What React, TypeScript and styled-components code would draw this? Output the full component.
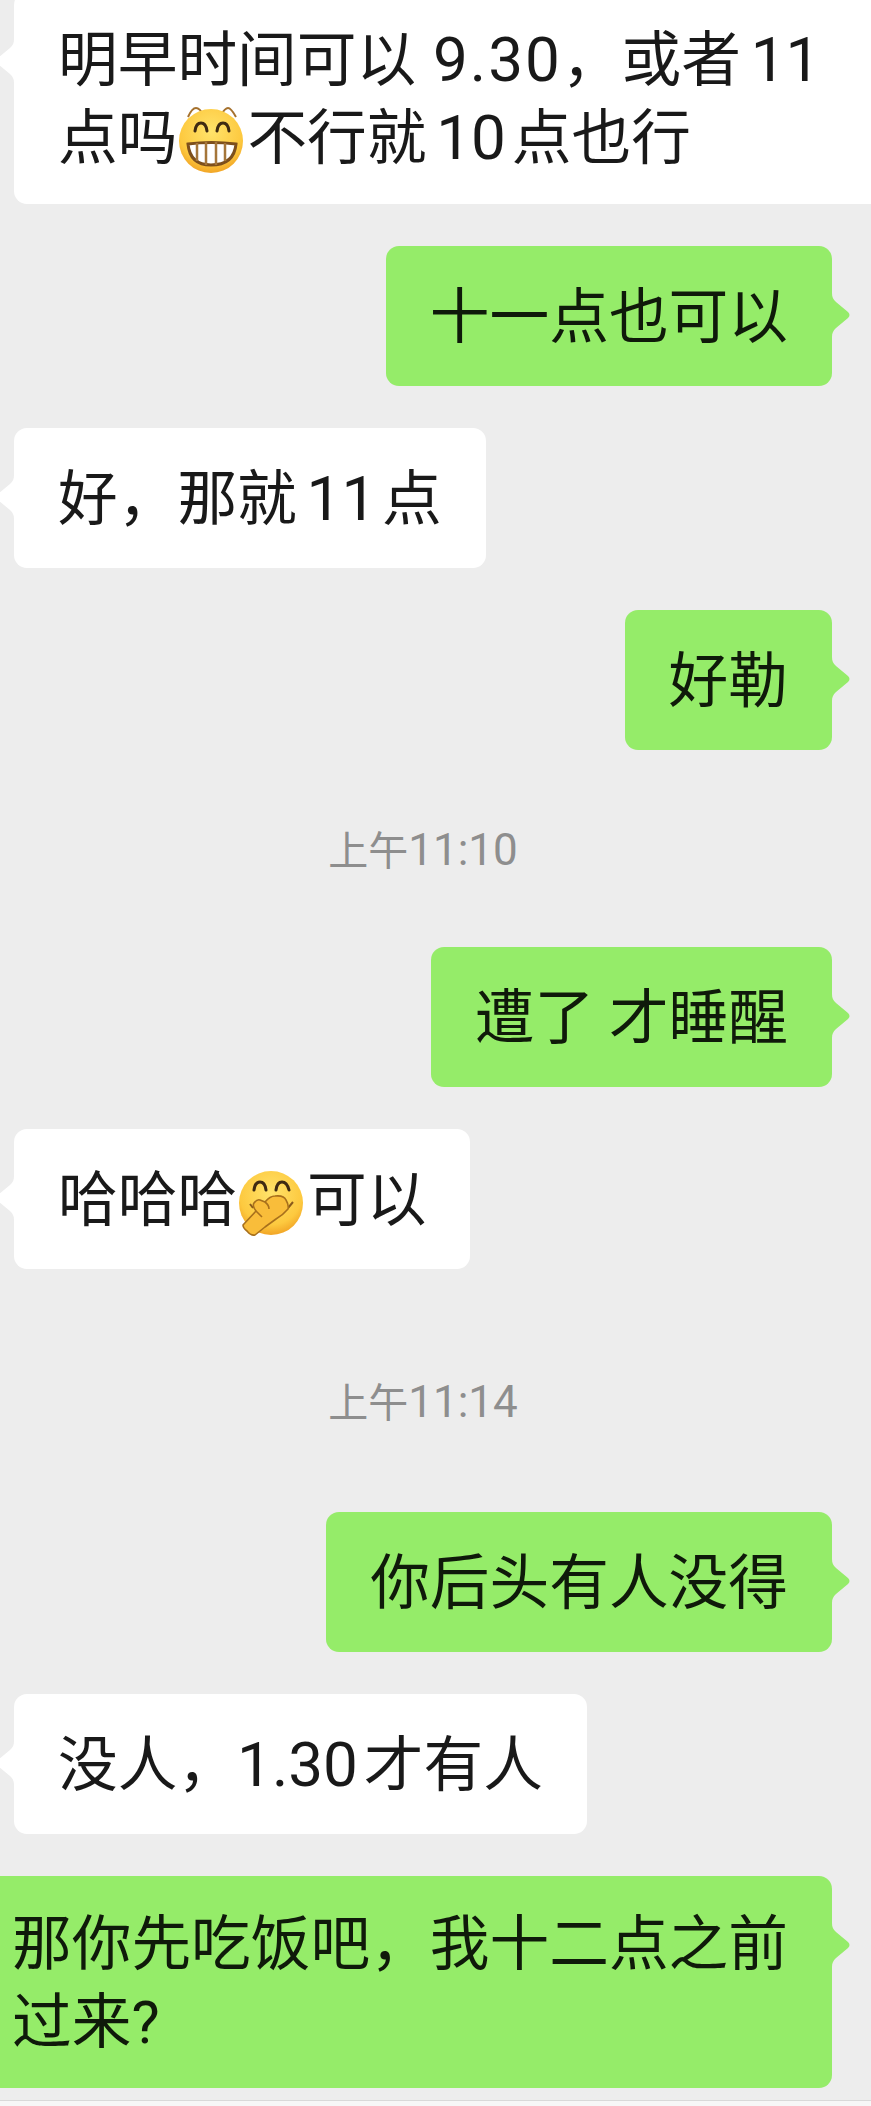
import styled, { createGlobalStyle } from "styled-components";

const GlobalStyle = createGlobalStyle`
  html, body {
    margin: 0;
    height: 2106px;
    overflow: hidden;
    background: #ededed;
  }
  #root {
    height: 2106px;
  }
`;

const Page = styled.main`
  display: flex;
  flex-direction: column;
  height: 2106px;
  overflow: hidden;
  background: #ededed;
  font-family: Roboto, "Noto Sans CJK SC", sans-serif;
`;
const Chat = styled.div`
  flex: 1;
  display: flex;
  flex-direction: column;
  gap: 42px;
  margin-top: -8px;
  padding: 0 39px 0 14px;
`;
const Row = styled.div<{ $mine?: boolean }>`
  display: flex;
  justify-content: ${(p) => (p.$mine ? "flex-end" : "flex-start")};
`;
const Bubble = styled.div<{ $mine?: boolean; $tall?: boolean; $bleed?: boolean }>`
  position: relative;
  flex: none;
  height: ${(p) => (p.$tall ? "212px" : "140px")};
  box-sizing: border-box;
  padding: ${(p) => (p.$tall ? "30px" : "33px")} ${(p) => (p.$bleed ? "80px" : "44px")} 0 44px;
  border-radius: 13px;
  background: ${(p) => (p.$mine ? "#95ec69" : "#ffffff")};
  color: ${(p) => (p.$mine ? "#0f1a0a" : "#191919")};
  font-size: 59.7px;
  line-height: 78px;
  word-spacing: -5px;
  white-space: nowrap;
`;
const Tail = styled.svg<{ $mine?: boolean }>`
  position: absolute;
  top: 47px;
  width: 18px;
  height: 44px;
  fill: ${(p) => (p.$mine ? "#95ec69" : "#ffffff")};
  ${(p) => (p.$mine ? "right: -18px;" : "left: -18px; transform: scaleX(-1);")}
`;
const Num = styled.span<{ $wide?: boolean }>`
  font-size: 62px;
  line-height: 1;
  ${(p) => (p.$wide ? "margin-left: 7px; letter-spacing: 2px;" : "margin-right: -4px;")}
`;
const FullSpace = styled.span`
  word-spacing: 0;
`;
const Time = styled.div<{ $before: number; $after: number }>`
  margin: ${(p) => p.$before}px 0 ${(p) => p.$after}px;
  height: 56px;
  color: #8e8e8e;
  font-size: 40px;
  line-height: 56px;
  text-align: center;
`;
const Clock = styled.span`
  font-size: 44px;
  line-height: 1;
`;
const Emoji = styled.svg`
  display: inline-block;
  width: 68px;
  height: 72px;
  margin: -10px 2px -10px 0;
  vertical-align: -7px;
`;
const BottomEdge = styled.div`
  flex: none;
  height: 5px;
  border-top: 1px solid #d9d9d9;
  background: #f7f7f7;
`;

const Grin = () => (
  <Emoji viewBox="0 0 66 72">
    <defs>
      <radialGradient id="grinFace" cx="50%" cy="35%" r="70%">
        <stop offset="0%" stopColor="#ffe36b" />
        <stop offset="70%" stopColor="#fdc93f" />
        <stop offset="100%" stopColor="#ee9a1e" />
      </radialGradient>
    </defs>
    <path d="M10 13Q14 4 18 4T25 11M43 11Q47 4 50 4T58 13" fill="none" stroke="#a5712d" strokeWidth="2" />
    <circle cx="33" cy="37" r="32" fill="url(#grinFace)" />
    <path
      d="M17 27Q18 19 23 19T29 27M39 27Q40 19 45 19T51 27"
      fill="none"
      stroke="#3f2a12"
      strokeWidth="3"
      strokeLinecap="round"
    />
    <path d="M10 40Q33 37 58 40Q56 61 33 61Q12 61 10 40Z" fill="#fff" stroke="#7d4f1c" strokeWidth="3" />
    <path d="M19 39V57M28 38V61M38 38V61M47 39V57" stroke="#a5763a" strokeWidth="2.5" />
  </Emoji>
);

const HandOverMouth = () => (
  <Emoji viewBox="0 0 66 72">
    <defs>
      <radialGradient id="handFace" cx="50%" cy="35%" r="70%">
        <stop offset="0%" stopColor="#ffe36b" />
        <stop offset="70%" stopColor="#fdc93f" />
        <stop offset="100%" stopColor="#ee9a1e" />
      </radialGradient>
    </defs>
    <circle cx="33" cy="37" r="32" fill="url(#handFace)" />
    <path
      d="M16 24Q17 16 22 16T28 24M38 24Q39 16 44 16T51 24"
      fill="none"
      stroke="#3f2a12"
      strokeWidth="3"
      strokeLinecap="round"
    />
    <path d="M12 38L15 42M50 42L55 36" fill="none" stroke="#8a5a1c" strokeWidth="2" />
    <path
      d="M5 59L18 45Q14 40 16 37Q19 33 22 34L27 36Q32 30 37 30Q46 29 48 34Q51 39 50 43Q45 49 38 53L27 61L17 69Q13 70 9 65Q5 62 5 59Z"
      fill="#f9bd3a"
      stroke="#a8701c"
      strokeWidth="1.6"
      strokeLinejoin="round"
    />
    <path d="M18 45L24 51M27 36Q31 39 31 43" fill="none" stroke="#a8701c" strokeWidth="1.6" />
  </Emoji>
);

const Message = ({
  mine,
  tall,
  bleed,
  children,
}: {
  mine?: boolean;
  tall?: boolean;
  bleed?: boolean;
  children: React.ReactNode;
}) => (
  <Row $mine={mine}>
    <Bubble $mine={mine} $tall={tall} $bleed={bleed}>
      <Tail $mine={mine} viewBox="0 0 18 44">
        <path d="M0 0C0 4 1 6 4 9L16 19Q19 22 16 25L4 35C1 38 0 40 0 44Z" />
      </Tail>
      {children}
    </Bubble>
  </Row>
);

export default function App() {
  return (
    <Page>
      <GlobalStyle />
      <Chat>
        <Message tall bleed>
          明早时间可以 <Num $wide>9.30</Num>，或者 <Num>11</Num>
          <br />
          点吗
          <Grin />
          不行就 <Num>10</Num> 点也行
        </Message>
        <Message mine>十一点也可以</Message>
        <Message>
          好，那就 <Num>11</Num> 点
        </Message>
        <Message mine>好勒</Message>
        <Time $before={32} $after={25}>
          上午<Clock>11:10</Clock>
        </Time>
        <Message mine>
          <FullSpace>遭了 才睡醒</FullSpace>
        </Message>
        <Message>
          哈哈哈
          <HandOverMouth />
          可以
        </Message>
        <Time $before={65} $after={38}>
          上午<Clock>11:14</Clock>
        </Time>
        <Message mine>你后头有人没得</Message>
        <Message>
          没人，<Num>1.30</Num> 才有人
        </Message>
        <Message mine tall>
          那你先吃饭吧，我十二点之前
          <br />
          过来?
        </Message>
      </Chat>
      <BottomEdge />
    </Page>
  );
}
